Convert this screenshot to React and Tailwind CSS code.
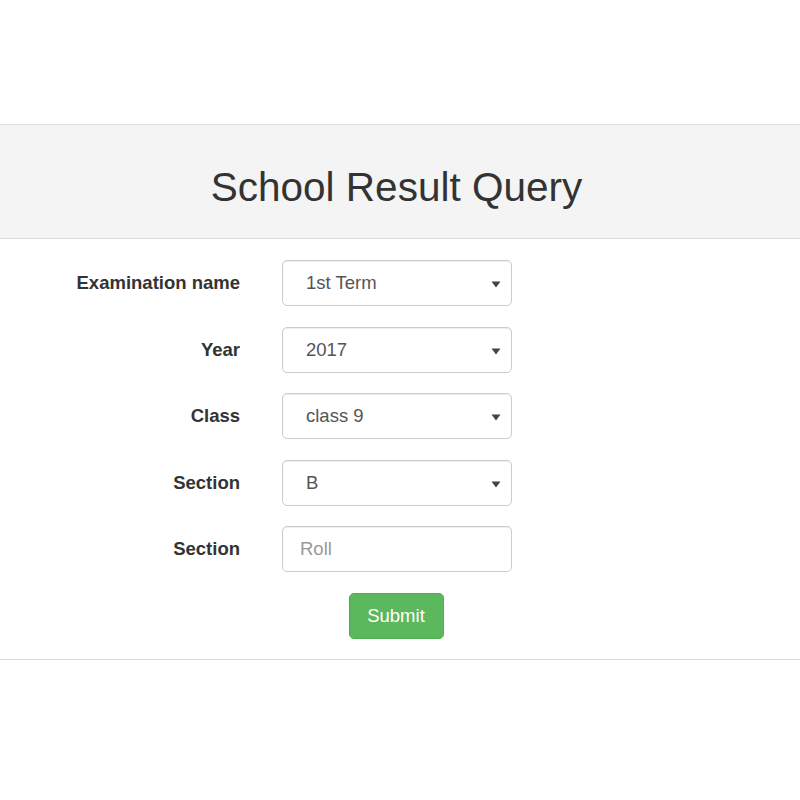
const fields = [
  { label: "Examination name", value: "1st Term", select: true },
  { label: "Year", value: "2017", select: true },
  { label: "Class", value: "class 9", select: true },
  { label: "Section", value: "B", select: true },
  { label: "Section", value: "Roll", select: false },
];

const Caret = () => (
  <svg width="10" height="7" viewBox="0 0 10 7" className="absolute right-[10px] top-[20px]">
    <path d="M0.5 0.5 L9.5 0.5 L5 6.5 Z" fill="#444" />
  </svg>
);

export default function App() {
  return (
    <div className="min-h-[800px] bg-white font-['Liberation_Sans',Arial,sans-serif] text-[#333]">
      <div className="h-[124px]" />
      <div className="border-y border-[#dcdcdc] bg-[#f4f4f4] h-[115px] flex items-center justify-center">
        <h2 className="text-[40.5px] leading-none text-[#333] pt-[11px] pr-[7px]">School Result Query</h2>
      </div>
      <div className="border-b border-[#dcdcdc] pt-[21px] pb-[20px]">
        <div className="flex flex-col gap-[20.5px]">
          {fields.map((f, i) => (
            <div key={i} className="flex items-center h-[46px]">
              <label className="w-[240px] text-right font-bold text-[18.5px]">{f.label}</label>
              <div className="relative ml-[42px] w-[230px] h-[46px] border border-[#ccc] rounded-[5px] bg-white shadow-[inset_0_1px_1px_rgba(0,0,0,0.075)] flex items-center">
                {f.select ? (
                  <span className="pl-[23px] text-[18.5px] text-[#555]">{f.value}</span>
                ) : (
                  <span className="pl-[17px] text-[18.5px] text-[#999]">{f.value}</span>
                )}
                {f.select && <Caret />}
              </div>
            </div>
          ))}
          <div className="flex">
            <div className="w-[281px]" />
            <div className="w-[230px] flex justify-center">
              <button className="h-[46px] w-[95px] rounded-[5px] bg-[#5cb85c] border border-[#4cae4c] text-white text-[18.5px]">
                Submit
              </button>
            </div>
          </div>
        </div>
      </div>
    </div>
  );
}
